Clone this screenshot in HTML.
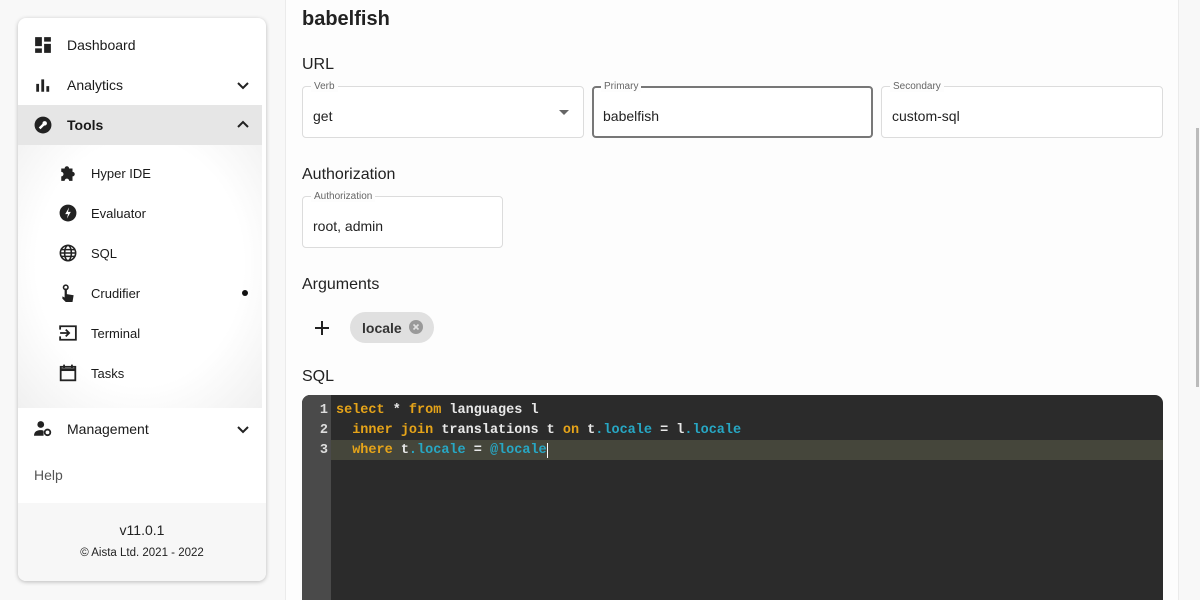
<!DOCTYPE html>
<html><head><meta charset="utf-8"><style>
*{box-sizing:border-box;margin:0;padding:0}
html,body{width:1200px;height:600px;overflow:hidden}
body{background:#f8f8f8;font-family:"Liberation Sans",sans-serif;color:#1a1a1a;position:relative}
.side{position:absolute;left:18px;top:18px;width:248px;height:563px;background:#fff;border-radius:8px;box-shadow:0 1px 4px rgba(0,0,0,.25);overflow:hidden}
.row{position:absolute;left:0;width:244px;height:40px;font-size:14px;display:flex;align-items:center}
.row .ic{position:absolute;left:16px;top:11px;width:18px;height:18px}
.row .t{position:absolute;left:49px}
.chev{position:absolute;right:12px;top:13px}
.sub{position:absolute;left:0;top:127px;width:244px;height:263px;background:radial-gradient(ellipse at 50% 45%,#fff 60%,#f0f0f0 100%)}
.sr{position:absolute;left:0;width:244px;height:40px;font-size:13px;display:flex;align-items:center}
.sr .ic{position:absolute;left:41px;top:11px}
.sr .t{position:absolute;left:73px}
.foot{position:absolute;left:0;top:485px;width:248px;height:78px;background:#f7f7f7;text-align:center}
.main{position:absolute;left:285px;top:0;width:894px;height:600px;background:#fdfdfd;border-left:1px solid #ebebeb;border-right:1px solid #ebebeb}
h1{position:absolute;left:302px;top:8px;font-size:20px;font-weight:bold;color:#222}
h2{position:absolute;left:302px;font-size:16px;font-weight:normal;color:#222}
.fld{position:absolute;height:52px;border:1px solid #dcdcdc;border-radius:4px;background:#fff}
.fld .lb{position:absolute;left:8px;top:-6px;font-size:10px;color:#666;background:#fdfdfd;padding:0 3px;line-height:11px}
.fld .v{position:absolute;left:10px;top:21px;font-size:14px;color:#222}
.ed{position:absolute;left:302px;top:395px;width:861px;height:205px;background:#2b2b2b;border-radius:8px 8px 0 0;overflow:hidden;font-family:"Liberation Mono",monospace;font-size:13.5px;font-weight:bold}
.gut{position:absolute;left:0;top:0;width:29px;height:100%;background:#4a4a4a}
.ln{position:absolute;height:20px;line-height:20px;white-space:pre;color:#e8e8e8}
.n{position:absolute;left:0;width:26px;text-align:right;color:#ddd;line-height:20px}
.k{color:#e6a419}.p{color:#27a7c4}
</style></head><body>
<div class="side">
 <div class="row" style="top:7px"><svg class="ic" viewBox="0 0 16 16"><rect x="1" y="1" width="6" height="8" fill="#222"/><rect x="9" y="1" width="6" height="4" fill="#222"/><rect x="9" y="7" width="6" height="8" fill="#222"/><rect x="1" y="11" width="6" height="4" fill="#222"/></svg><span class="t">Dashboard</span></div>
 <div class="row" style="top:47px"><svg class="ic" viewBox="0 0 16 16"><rect x="2" y="7" width="2.5" height="7" fill="#222"/><rect x="6.5" y="3" width="2.5" height="11" fill="#222"/><rect x="11" y="9" width="2.5" height="5" fill="#222"/></svg><span class="t">Analytics</span><svg class="chev" width="14" height="14" viewBox="0 0 14 14"><path d="M2 5l5 5 5-5" stroke="#222" stroke-width="2" fill="none"/></svg></div>
 <div class="row" style="top:87px;background:#e6e6e6;font-weight:bold"><svg class="ic" viewBox="0 0 16 16"><circle cx="8" cy="8" r="7.5" fill="#222"/><path d="M5 11l4-4" stroke="#fff" stroke-width="2.2"/><circle cx="9.5" cy="6.5" r="2" fill="#fff"/></svg><span class="t">Tools</span><svg class="chev" width="14" height="14" viewBox="0 0 14 14"><path d="M2 9l5-5 5 5" stroke="#222" stroke-width="2" fill="none"/></svg></div>
 <div class="sub">
  <div class="sr" style="top:8px"><svg class="ic" width="18" height="18" viewBox="0 0 16 16"><path d="M2 4h3a2 2 0 1 1 4 0h3v3a2 2 0 1 1 0 4v4H9a2 2 0 1 0-4 0H2v-4a2 2 0 1 0 0-4z" fill="#222"/></svg><span class="t">Hyper IDE</span></div>
  <div class="sr" style="top:48px"><svg class="ic" width="18" height="18" viewBox="0 0 16 16"><circle cx="8" cy="8" r="7.5" fill="#222"/><path d="M9 3L5.5 9H8l-1 4 3.5-6H8z" fill="#fff"/></svg><span class="t">Evaluator</span></div>
  <div class="sr" style="top:88px"><svg class="ic" width="18" height="18" viewBox="0 0 16 16" fill="none" stroke="#222" stroke-width="1.4"><circle cx="8" cy="8" r="6.8"/><ellipse cx="8" cy="8" rx="3" ry="6.8"/><path d="M1.2 8h13.6M2 5h12M2 11h12"/></svg><span class="t">SQL</span></div>
  <div class="sr" style="top:128px"><svg class="ic" width="18" height="18" viewBox="0 0 16 16"><circle cx="6" cy="3" r="2" fill="none" stroke="#222" stroke-width="1.4"/><path d="M5 4v8l-2-1v2l3 3h6l1-6-6-1V4z" fill="#222"/></svg><span class="t">Crudifier</span><span style="position:absolute;left:224px;top:17px;width:6px;height:6px;border-radius:50%;background:#111"></span></div>
  <div class="sr" style="top:168px"><svg class="ic" width="18" height="18" viewBox="0 0 16 16" fill="none" stroke="#222" stroke-width="1.6"><path d="M1 5V2h14v12H1v-3"/><path d="M1 8h8M6 5l3 3-3 3"/></svg><span class="t">Terminal</span></div>
  <div class="sr" style="top:208px"><svg class="ic" width="18" height="18" viewBox="0 0 16 16" fill="none" stroke="#222" stroke-width="1.6"><rect x="1.5" y="2.5" width="13" height="12"/><path d="M1.5 5h13" stroke-width="2.5"/><path d="M4.5 0.5v3M11.5 0.5v3"/></svg><span class="t">Tasks</span></div>
 </div>
 <div class="row" style="top:391px"><svg class="ic" viewBox="0 0 16 16"><circle cx="6" cy="4" r="3" fill="#222"/><path d="M0 14c0-4 3-5 6-5 1 0 2 .2 2.5.5V14z" fill="#222"/><circle cx="12" cy="11" r="2.5" fill="none" stroke="#222" stroke-width="1.6"/></svg><span class="t">Management</span><svg class="chev" width="14" height="14" viewBox="0 0 14 14"><path d="M2 5l5 5 5-5" stroke="#222" stroke-width="2" fill="none"/></svg></div>
 <div style="position:absolute;left:16px;top:449px;font-size:14px;color:#555">Help</div>
 <div class="foot"><div style="margin-top:19px;font-size:14px;color:#222">v11.0.1</div><div style="margin-top:9px;font-size:11.5px;color:#222">© Aista Ltd. 2021 - 2022</div></div>
</div>
<div class="main"></div>
<div style="position:absolute;left:1196px;top:128px;width:3px;height:259px;background:#bbb"></div>
<h1>babelfish</h1>
<h2 style="top:56px">URL</h2>
<div class="fld" style="left:302px;top:86px;width:282px"><span class="lb">Verb</span><span class="v">get</span><svg style="position:absolute;right:14px;top:23px" width="10" height="5"><path d="M0 0h10L5 5z" fill="#666"/></svg></div>
<div class="fld" style="left:592px;top:86px;width:281px;border:2px solid #777"><span class="lb" style="left:7px;top:-7px">Primary</span><span class="v" style="left:9px;top:20px">babelfish</span></div>
<div class="fld" style="left:881px;top:86px;width:282px"><span class="lb">Secondary</span><span class="v">custom-sql</span></div>
<h2 style="top:166px">Authorization</h2>
<div class="fld" style="left:302px;top:196px;width:201px"><span class="lb">Authorization</span><span class="v">root, admin</span></div>
<h2 style="top:276px">Arguments</h2>
<svg style="position:absolute;left:314px;top:320px" width="16" height="16"><path d="M8 1v14M1 8h14" stroke="#222" stroke-width="2"/></svg>
<div style="position:absolute;left:350px;top:312px;width:84px;height:31px;border-radius:16px;background:#e0e0e0;font-size:14px;font-weight:bold;color:#333"><span style="position:absolute;left:12px;top:8px">locale</span><svg style="position:absolute;left:59px;top:8px" width="14" height="14"><circle cx="7" cy="7" r="7" fill="#999"/><path d="M4.5 4.5l5 5M9.5 4.5l-5 5" stroke="#e0e0e0" stroke-width="1.6"/></svg></div>
<h2 style="top:368px">SQL</h2>
<div class="ed">
 <div class="gut"></div>
 <div style="position:absolute;left:29px;top:45px;width:840px;height:20px;background:#45463b"></div>
 <div class="n" style="top:6px">1</div><div class="n" style="top:26px">2</div><div class="n" style="top:46px">3</div>
 <div class="ln" style="left:34px;top:6px"><span class="k">select</span> * <span class="k">from</span> languages l</div>
 <div class="ln" style="left:34px;top:26px">  <span class="k">inner</span> <span class="k">join</span> translations t <span class="k">on</span> t<span class="p">.locale</span> = l<span class="p">.locale</span></div>
 <div class="ln" style="left:34px;top:46px">  <span class="k">where</span> t<span class="p">.locale</span> = <span class="p">@locale</span><span style="border-left:1px solid #fff"></span></div>
</div>
</body></html>
